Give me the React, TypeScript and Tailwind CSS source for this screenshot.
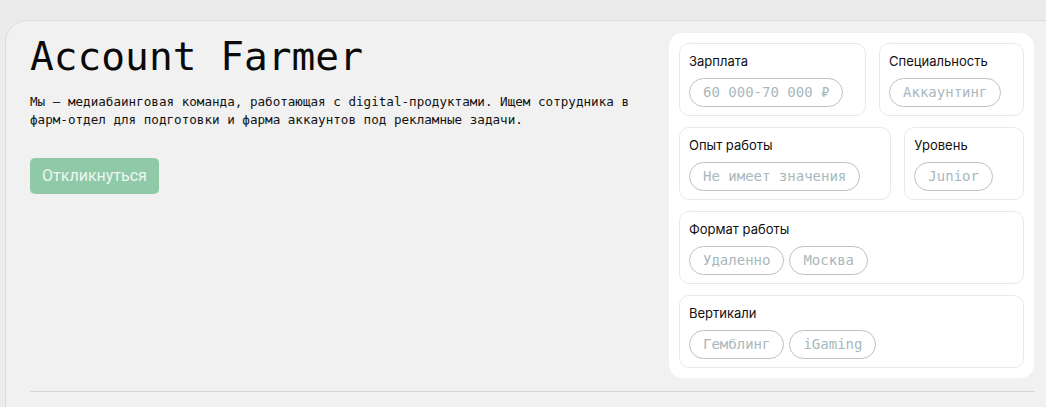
import React from "react";

const mono = { fontFamily: '"DejaVu Sans Mono", "Liberation Mono", monospace' };
const sans = { fontFamily: 'Inter, "Noto Sans", sans-serif' };

const Pill: React.FC<{ text: string }> = ({ text }) => (
    <span
        className="inline-flex items-center h-[29px] px-[13px] rounded-full border border-[#b9c3c4] text-[14px] text-[#a8b8bd] whitespace-nowrap"
        style={mono}
    >
        {text}
    </span>
);

const Box: React.FC<{ label: string; pills: string[] }> = ({ label, pills }) => (
    <div className="grow h-[73px] rounded-[10px] border border-[#e9e9e9] px-[9px] pt-[7px]">
        <div className="text-[13px] leading-[20px] text-[#111]" style={sans}>{label}</div>
        <div className="flex gap-[5px] mt-[7px]">
            {pills.map((p) => <Pill key={p} text={p} />)}
        </div>
    </div>
);

const App: React.FC = () => (
    <div className="w-[1046px] h-[407px] overflow-hidden bg-[#ebebeb] pt-[20px] pl-[5px]">
        <div className="w-[1080px] h-[420px] rounded-tl-[22px] border border-[#dcdcdc] bg-[#f1f1f1] pt-[12px] pl-[24px]">
            <div className="flex">
                <div className="flex-1">
                    <h1 className="text-[39.5px] leading-[48px] text-[#0a0a0a] mt-[-1px]" style={mono}>Account Farmer</h1>
                    <p className="text-[12.6px] leading-[18px] text-[#111] mt-[13px]" style={mono}>
                        Мы — медиабаинговая команда, работающая с digital-продуктами. Ищем сотрудника в<br />
                        фарм-отдел для подготовки и фарма аккаунтов под рекламные задачи.
                    </p>
                    <button
                        className="mt-[29px] h-[36px] w-[129px] rounded-[5px] bg-[#8fc9a7] text-[16px] text-[#eef7f1]"
                        style={{ fontFamily: 'Roboto, "Liberation Sans", sans-serif' }}
                    >
                        Откликнуться
                    </button>
                </div>
                <div className="w-[365px] mr-[50px] rounded-[14px] bg-white p-[10px] flex flex-col gap-[11px]">
                    <div className="flex gap-[13px]">
                        <Box label="Зарплата" pills={["60 000-70 000 ₽"]} />
                        <Box label="Специальность" pills={["Аккаунтинг"]} />
                    </div>
                    <div className="flex gap-[13px]">
                        <Box label="Опыт работы" pills={["Не имеет значения"]} />
                        <Box label="Уровень" pills={["Junior"]} />
                    </div>
                    <div className="flex">
                        <Box label="Формат работы" pills={["Удаленно", "Москва"]} />
                    </div>
                    <div className="flex">
                        <Box label="Вертикали" pills={["Гемблинг", "iGaming"]} />
                    </div>
                </div>
            </div>
            <div className="mt-[13px] w-[1005px] border-t border-[#d6d6d6]" />
        </div>
    </div>
);

export default App;
